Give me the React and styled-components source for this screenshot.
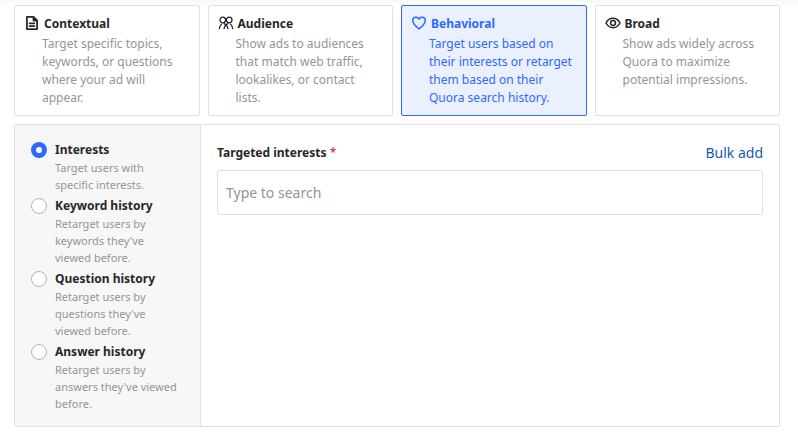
import React, { useState } from 'react';
import styled, { createGlobalStyle } from 'styled-components';

const GlobalStyle = createGlobalStyle`
    *{
        box-sizing: border-box;
    }
    body{
        margin: 0;
        background: #fff linear-gradient(#f7f7f7, #fff) no-repeat 0 0 / 100% 5px;
        color: #282829;
        font-family: "Segoe UI", "Noto Sans", sans-serif;
        font-size: 12px;
    }
    button, input{
        font-family: inherit;
    }
`

const Page = styled.main`
    padding: 5px 18px 12px 14px;
`

const Cards = styled.div`
    display: grid;
    grid-template-columns: repeat(4, 1fr);
    gap: 8px;
    margin-bottom: 8px;
`

const Card = styled.button`
    display: flex;
    flex-direction: column;
    padding: 8px 9px;
    border: 1px solid ${props => props.$active ? '#2e69ff' : '#dee0e1'};
    border-radius: 2px;
    background: ${props => props.$active ? '#ebf0ff' : '#fff'};
    color: ${props => props.$active ? '#2e69ff' : '#282829'};
    text-align: left;
    cursor: pointer;
`

const CardTitle = styled.span`
    display: flex;
    gap: 4px;
    font-size: 12px;
    font-weight: 700;
    line-height: 20px;
`

const CardText = styled.span`
    padding: 1px 3px 0 18px;
    color: ${props => props.$active ? '#2e69ff' : '#939598'};
    font-size: 12px;
    line-height: 18px;
`

const Icon = styled.svg`
    flex: none;
    width: 16px;
    height: 16px;
    margin-top: 1px;
    fill: none;
    stroke: currentColor;
    stroke-width: 1.5;
    stroke-linejoin: round;
    stroke-linecap: round;
`

const Panel = styled.div`
    display: flex;
    border: 1px solid #dee0e1;
    border-radius: 2px;
`

const Sidebar = styled.div`
    display: flex;
    flex-direction: column;
    flex: 0 0 186px;
    gap: 4px;
    padding: 16px 20px 14px 16px;
    border-right: 1px solid #dee0e1;
    background: #f7f7f8;
`

const Option = styled.label`
    display: flex;
    gap: 8px;
    cursor: pointer;
`

const Radio = styled.input`
    appearance: none;
    flex: none;
    width: 16px;
    height: 16px;
    margin: 1px 0 0;
    border: 1px solid #b1b3b6;
    border-radius: 50%;
    background: #fff;

    &:checked{
        border: 5px solid #2e69ff;
    }
`

const OptionTitle = styled.span`
    display: block;
    font-size: 12px;
    font-weight: 700;
    line-height: 18px;
`

const OptionText = styled.span`
    display: block;
    color: #939598;
    font-size: 11px;
    line-height: 17px;
`

const Content = styled.div`
    flex: 1;
    padding: 16px;
`

const FieldHeader = styled.div`
    display: flex;
    align-items: center;
    justify-content: space-between;
    margin-bottom: 5px;
    line-height: 24px;
`

const FieldLabel = styled.label`
    font-weight: 700;

    & span{
        color: #b92b27;
        font-weight: 400;
    }
`

const BulkLink = styled.a`
    color: #195aaf;
    font-size: 14px;
    text-decoration: none;
`

const Search = styled.input`
    display: block;
    width: 100%;
    height: 45px;
    padding: 0 8px;
    border: 1px solid #dee0e1;
    border-radius: 3px;
    font-size: 14px;

    &::placeholder{
        color: #939598;
        opacity: 1;
    }
`

const cards = [
    {
        name: 'Contextual',
        text: 'Target specific topics, keywords, or questions where your ad will appear.',
        icon: <path strokeWidth="1.8" d="M2.9 1.9h6.6l3.6 3.6v8.6H2.9zM9.500 2v3.500H13M5.600 8.300h4.800M5.600 11.200h4.800" />
    },
    {
        name: 'Audience',
        text: 'Show ads to audiences that match web traffic, lookalikes, or contact lists.',
        icon: (
            <g strokeWidth="1.3">
                <circle cx="4.8" cy="5" r="2.8" />
                <circle cx="11.2" cy="5" r="2.8" />
                <path d="M3.400 9.200Q1.700 10.500 1.400 13.500M12.600 9.200Q14.300 10.500 14.600 13.500M6.200 8.600Q9.400 10.200 9.900 13.500M9.800 8.600Q6.600 10.200 6.100 13.500" />
            </g>
        )
    },
    {
        name: 'Behavioral',
        text: 'Target users based on their interests or retarget them based on their Quora search history.',
        icon: <path d="M8 14C5.500 12 1.700 9 1.700 5.600A3.300 3.300 0 0 1 8 4.200A3.300 3.300 0 0 1 14.300 5.600C14.300 9 10.500 12 8 14Z" />
    },
    {
        name: 'Broad',
        text: 'Show ads widely across Quora to maximize potential impressions.',
        icon: (
            <>
                <path d="M1 8C4.200 1.800 11.800 1.800 15 8C11.800 14.200 4.200 14.200 1 8Z" />
                <circle cx="8" cy="8" r="2.4" />
            </>
        )
    }
]

const options = [
    { name: 'Interests', text: 'Target users with specific interests.' },
    { name: 'Keyword history', text: "Retarget users by keywords they've viewed before." },
    { name: 'Question history', text: "Retarget users by questions they've viewed before." },
    { name: 'Answer history', text: "Retarget users by answers they've viewed before." }
]

export default function App() {
    const [card, setCard] = useState('Behavioral');
    const [option, setOption] = useState('Interests');

    return (
        <Page>
            <GlobalStyle />
            <Cards>
                {cards.map(item => (
                    <Card key={item.name} type="button" $active={card === item.name} aria-pressed={card === item.name} onClick={() => setCard(item.name)}>
                        <CardTitle>
                            <Icon viewBox="0 0 16 16" aria-hidden="true">{item.icon}</Icon>
                            {item.name}
                        </CardTitle>
                        <CardText $active={card === item.name}>{item.text}</CardText>
                    </Card>
                ))}
            </Cards>
            <Panel>
                <Sidebar>
                    {options.map(item => (
                        <Option key={item.name}>
                            <Radio type="radio" name="targeting" checked={option === item.name} onChange={() => setOption(item.name)} />
                            <span>
                                <OptionTitle>{item.name}</OptionTitle>
                                <OptionText>{item.text}</OptionText>
                            </span>
                        </Option>
                    ))}
                </Sidebar>
                <Content>
                    <FieldHeader>
                        <FieldLabel htmlFor="interests">Targeted interests <span>*</span></FieldLabel>
                        <BulkLink href="#bulk">Bulk add</BulkLink>
                    </FieldHeader>
                    <Search id="interests" type="text" placeholder="Type to search" />
                </Content>
            </Panel>
        </Page>
    )
}
